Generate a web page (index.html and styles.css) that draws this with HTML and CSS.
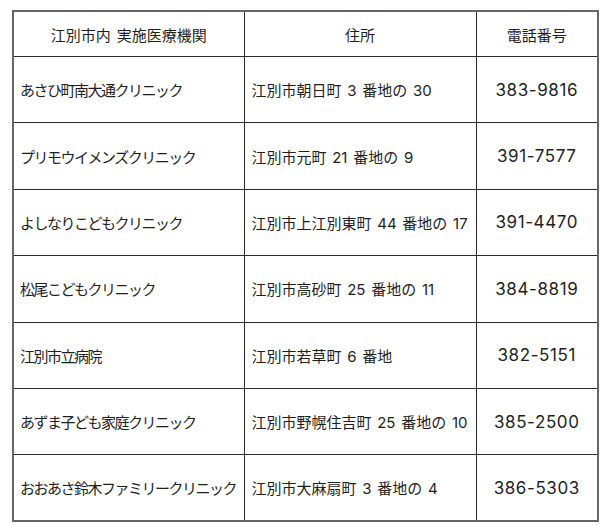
FILE: index.html
```html
<!DOCTYPE html>
<html lang="ja">
<head>
<meta charset="utf-8">
<title>江別市内 実施医療機関</title>
<link rel="stylesheet" href="styles.css">
</head>
<body>
<table class="clinics">
  <colgroup>
    <col class="col-name">
    <col class="col-addr">
    <col class="col-tel">
  </colgroup>
  <thead>
    <tr class="head-row">
      <th>江別市内 実施医療機関</th>
      <th>住所</th>
      <th>電話番号</th>
    </tr>
  </thead>
  <tbody>
    <tr><td class="name">あさひ町南大通クリニック</td><td class="addr">江別市朝日町 3 番地の 30</td><td class="tel">383-9816</td></tr>
    <tr><td class="name">プリモウイメンズクリニック</td><td class="addr">江別市元町 21 番地の 9</td><td class="tel">391-7577</td></tr>
    <tr><td class="name">よしなりこどもクリニック</td><td class="addr">江別市上江別東町 44 番地の 17</td><td class="tel">391-4470</td></tr>
    <tr><td class="name">松尾こどもクリニック</td><td class="addr">江別市高砂町 25 番地の 11</td><td class="tel">384-8819</td></tr>
    <tr><td class="name">江別市立病院</td><td class="addr">江別市若草町 6 番地</td><td class="tel">382-5151</td></tr>
    <tr><td class="name">あずま子ども家庭クリニック</td><td class="addr">江別市野幌住吉町 25 番地の 10</td><td class="tel">385-2500</td></tr>
    <tr><td class="name">おおあさ鈴木ファミリークリニック</td><td class="addr">江別市大麻扇町 3 番地の 4</td><td class="tel">386-5303</td></tr>
  </tbody>
</table>
</body>
</html>
```
FILE: styles.css
```css
html, body {
  margin: 0;
  padding: 0;
  background: #ffffff;
}
body {
  padding: 10px 0 0 12px;
  font-family: "Inter", "Noto Sans CJK JP", sans-serif;
  font-size: 15px;
  color: #1e1e1e;
}
.clinics {
  border-collapse: collapse;
  width: 585px;
  table-layout: fixed;
  border: 2px solid #666666;
}
.col-name { width: 231px; }
.col-addr { width: 232px; }
.col-tel { width: 122px; }
.clinics th,
.clinics td {
  border: 1px solid #2a2a2a;
  padding: 0;
  vertical-align: middle;
  white-space: nowrap;
  font-weight: normal;
}
.clinics th {
  text-align: center;
  height: 44px;
  word-spacing: 2px;
}
.clinics tbody tr {
  height: 66.4px;
}
.name {
  padding-left: 6px !important;
  letter-spacing: -1.5px;
  text-align: left;
}
.addr {
  padding-left: 7px !important;
  text-align: left;
  font-size: 15px;
  word-spacing: 1.5px;
}
.tel {
  text-align: center;
  font-size: 17px;
  letter-spacing: 0.6px;
}
```
